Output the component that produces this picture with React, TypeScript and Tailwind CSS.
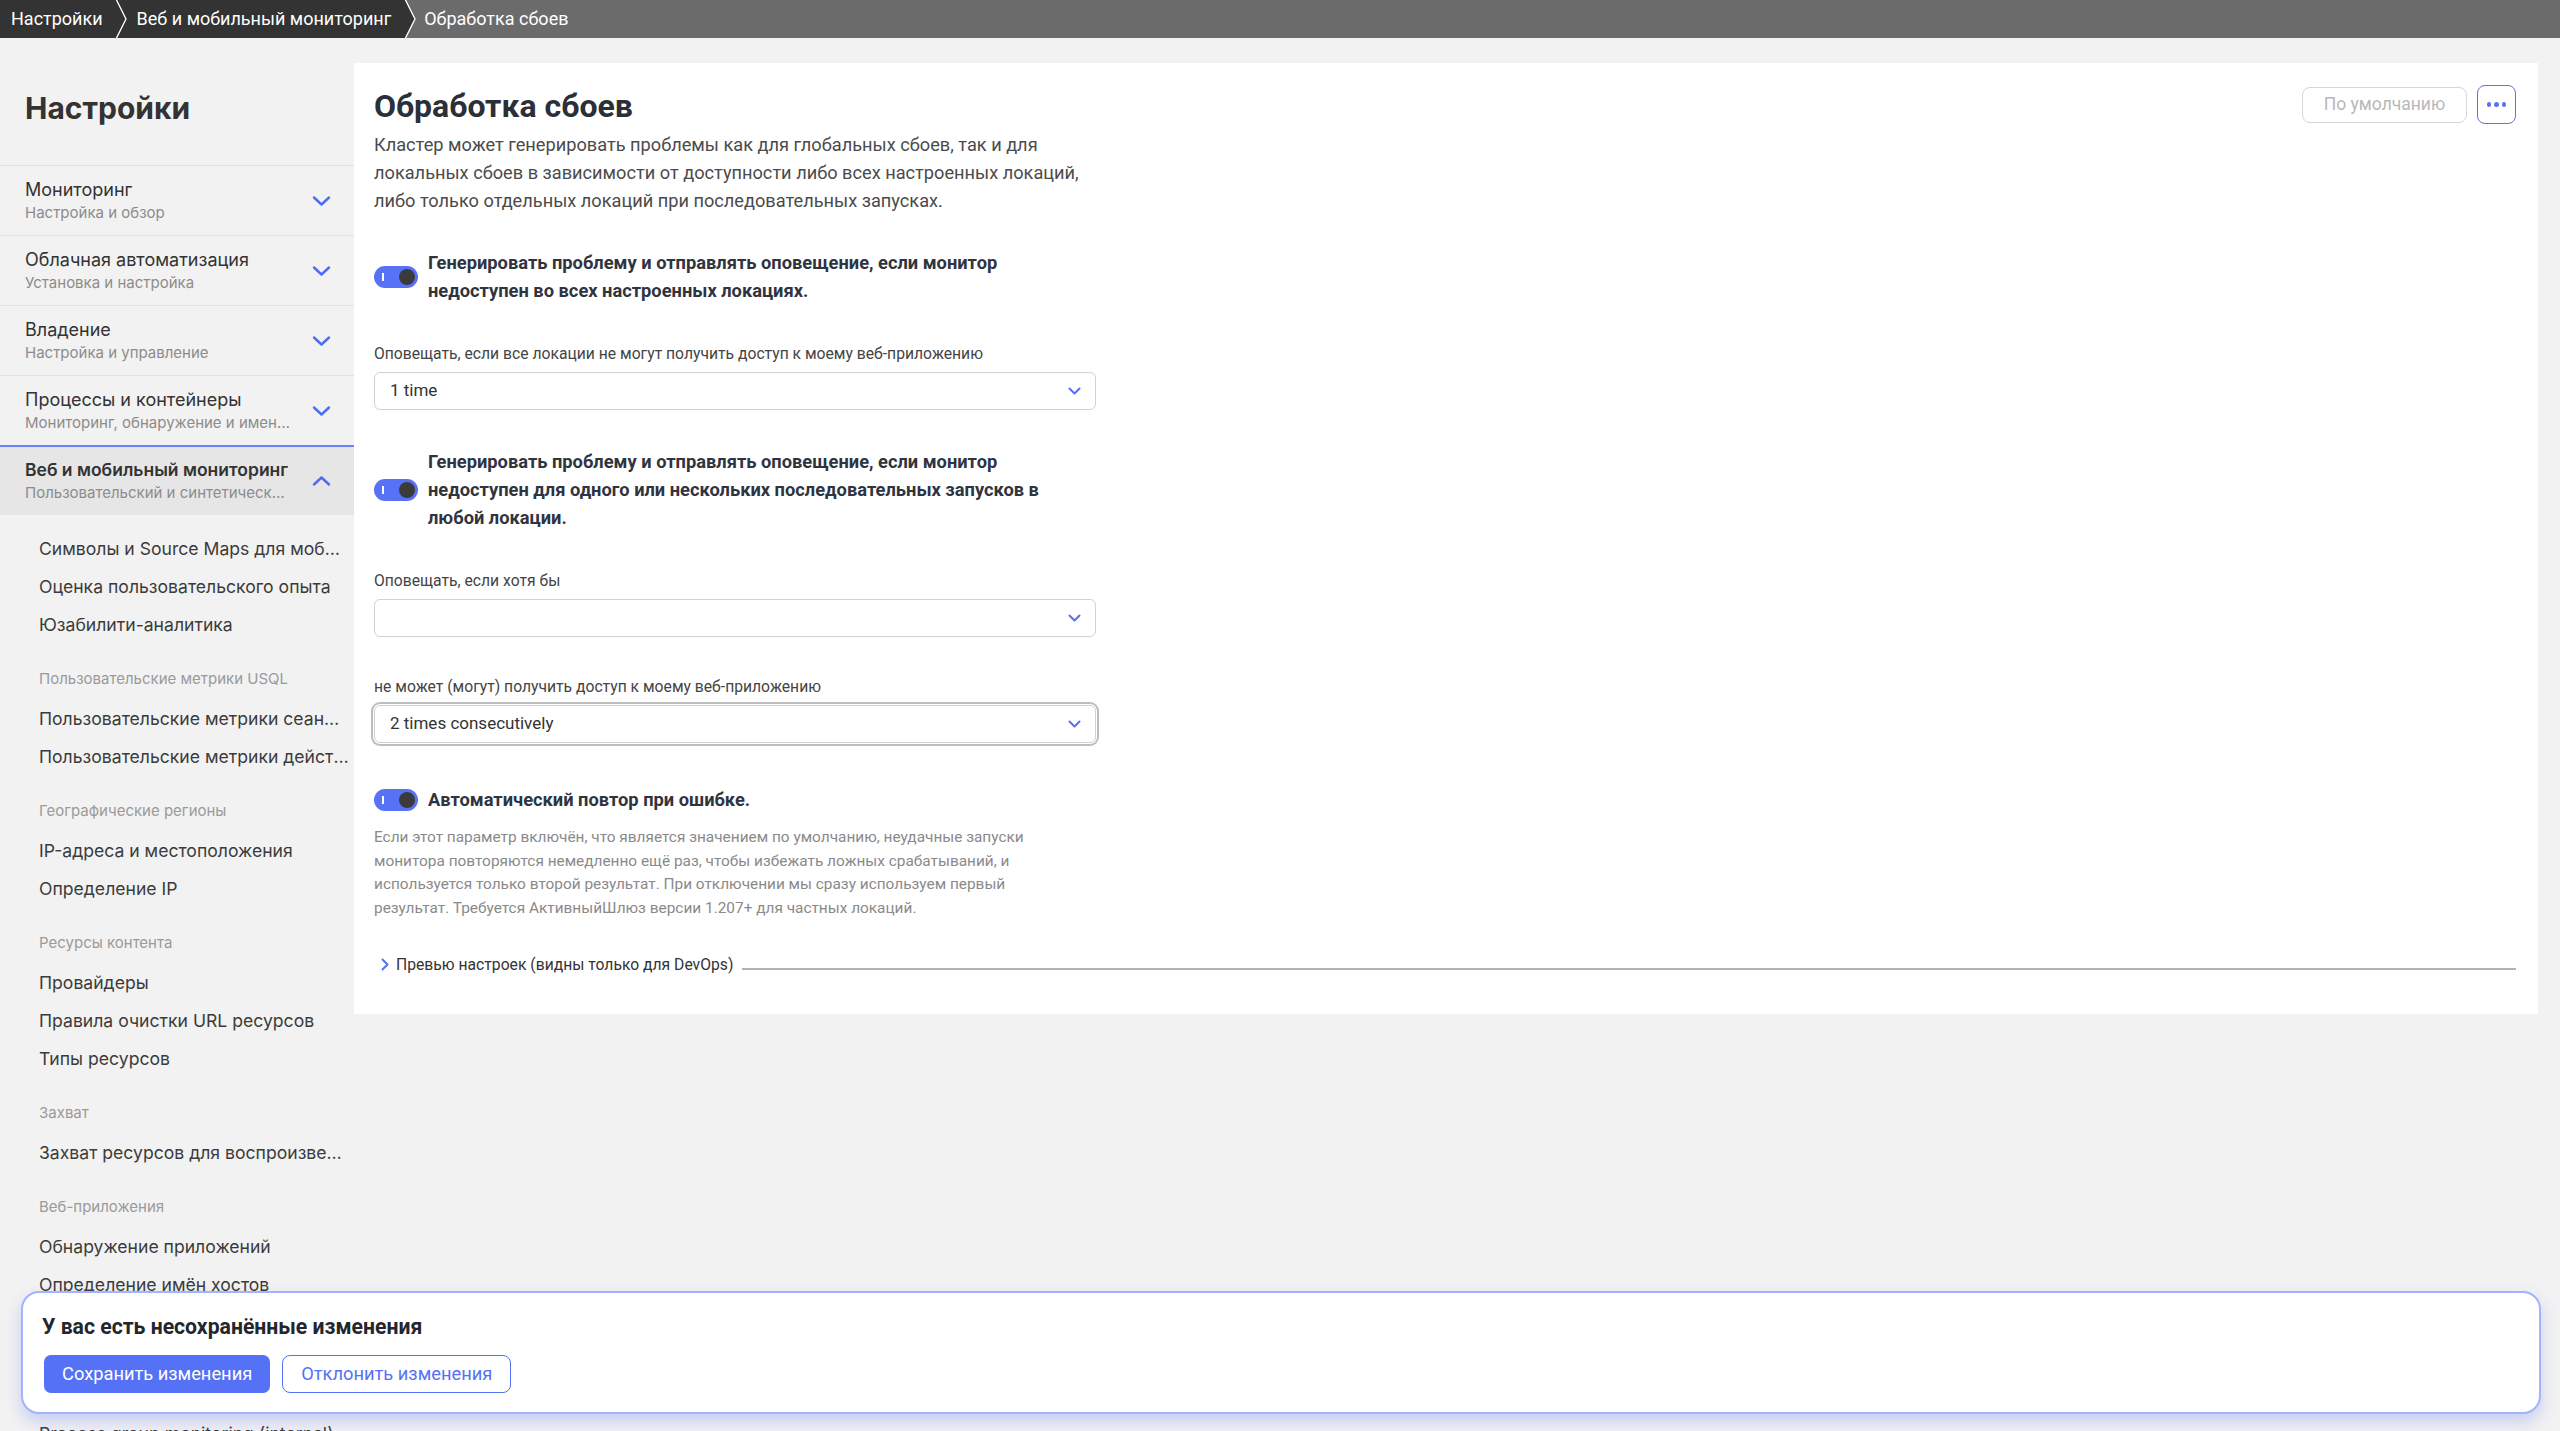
import React from "react";

const BLUE = "#5571f5";

const navItems = [
  { title: "Мониторинг", sub: "Настройка и обзор" },
  { title: "Облачная автоматизация", sub: "Установка и настройка" },
  { title: "Владение", sub: "Настройка и управление" },
  { title: "Процессы и контейнеры", sub: "Мониторинг, обнаружение и именование процессов" },
];

const groups: { label?: string; items: string[] }[] = [
  {
    items: [
      "Символы и Source Maps для мобильных приложений",
      "Оценка пользовательского опыта",
      "Юзабилити-аналитика",
    ],
  },
  {
    label: "Пользовательские метрики USQL",
    items: ["Пользовательские метрики сеансов", "Пользовательские метрики действий пользователей"],
  },
  { label: "Географические регионы", items: ["IP-адреса и местоположения", "Определение IP"] },
  {
    label: "Ресурсы контента",
    items: ["Провайдеры", "Правила очистки URL ресурсов", "Типы ресурсов"],
  },
  { label: "Захват", items: ["Захват ресурсов для воспроизведения сеансов"] },
  { label: "Веб-приложения", items: ["Обнаружение приложений", "Определение имён хостов"] },
];

function Chevron({ up = false }: { up?: boolean }) {
  return (
    <svg width="19" height="12" viewBox="0 0 19 12" className={up ? "rotate-180 shrink-0" : "shrink-0"}>
      <path d="M2 2.5L9.5 9.5L17 2.5" fill="none" stroke="#4d6bf5" strokeWidth="2.4" strokeLinecap="round" strokeLinejoin="round" />
    </svg>
  );
}

function Sep({ from, to }: { from: string; to: string }) {
  return (
    <svg width="12" height="38" viewBox="0 0 12 38" className="block shrink-0">
      <rect width="12" height="38" fill={to} />
      <polygon points="0,0 10,19 0,38" fill={from} />
      <polyline points="0,-1 10,19 0,39" fill="none" stroke="#ffffff" strokeWidth="1.3" />
    </svg>
  );
}

function Breadcrumbs() {
  return (
    <div className="flex h-[38px] shrink-0 bg-[#6b6b6b] text-[18px] leading-[38px] text-white">
      <div className="bg-[#333333] pl-[11px] pr-[13px]">Настройки</div>
      <Sep from="#333333" to="#333333" />
      <div className="bg-[#333333] pl-[9px] pr-[14px]">Веб и мобильный мониторинг</div>
      <Sep from="#333333" to="#6b6b6b" />
      <div className="pl-[7px]">Обработка сбоев</div>
    </div>
  );
}

function Sidebar() {
  return (
    <aside className="w-[354px] shrink-0 overflow-hidden font-['Inter','Noto_Sans',sans-serif]">
      <div className="h-[127px] pl-[25px] pt-[50px]">
        <h2 className="text-[30px] font-bold leading-[40px] text-[#333333]">Настройки</h2>
      </div>
      {navItems.map((n) => (
        <div key={n.title} className="flex h-[70px] items-center border-t border-[#e2e2e2] pl-[25px] pr-[23px]">
          <div className="min-w-0 flex-1">
            <div className="truncate text-[18px] leading-[24px] text-[#333333]">{n.title}</div>
            <div className="truncate text-[15px] leading-[22px] text-[#8c8c8c]">{n.sub}</div>
          </div>
          <div className="ml-[22px]">
            <Chevron />
          </div>
        </div>
      ))}
      <div className="flex h-[70px] items-center border-t-2 border-[#6b82f7] bg-[#e6e6e6] pl-[25px] pr-[23px]">
        <div className="min-w-0 flex-1">
          <div className="truncate text-[17.5px] font-semibold leading-[24px] text-[#333333]">Веб и мобильный мониторинг</div>
          <div className="truncate text-[15px] leading-[22px] text-[#8c8c8c]">
            Пользовательский и синтетический мониторинг
          </div>
        </div>
        <div className="ml-[22px]">
          <Chevron up />
        </div>
      </div>
      <div className="pt-[15px]">
        {groups.map((g, i) => (
          <div key={i}>
            {g.label && (
              <div className="pb-[2px] pl-[39px] pt-4 text-[15px] leading-[38px] text-[#9a9a9a]">{g.label}</div>
            )}
            {g.items.map((it) => (
              <div key={it} className="truncate pl-[39px] pr-[5px] text-[17.6px] leading-[38px] text-[#3b3b3b]">
                {it}
              </div>
            ))}
          </div>
        ))}
        <div className="h-[111px]" />
        <div className="truncate pl-[39px] pr-[5px] text-[17.6px] leading-[38px] text-[#3b3b3b]">
          Process group monitoring (internal)
        </div>
      </div>
    </aside>
  );
}

function Toggle() {
  return (
    <div className="flex h-[22px] w-[44px] shrink-0 items-center rounded-full bg-[#5872f6]">
      <span className="ml-[8px] h-[8px] w-[1.5px] bg-white" />
      <span className="ml-auto mr-[3px] h-[16px] w-[16px] rounded-full bg-[#3b3b3b]" />
    </div>
  );
}

function Select({ value, focused = false }: { value?: string; focused?: boolean }) {
  return (
    <div
      className={
        "flex h-[38px] w-[722px] items-center rounded-[6px] border border-[#d2d2d2] bg-white pl-[15px] pr-[14px] " +
        (focused ? "shadow-[0_0_0_1px_#ffffff,0_0_0_3px_#bdbdbd]" : "")
      }
    >
      <span className="flex-1 text-[17px] text-[#333333]">{value}</span>
      <svg width="13" height="8" viewBox="0 0 13 8">
        <path d="M1.5 1.5L6.5 6.5L11.5 1.5" fill="none" stroke={BLUE} strokeWidth="2" strokeLinecap="round" strokeLinejoin="round" />
      </svg>
    </div>
  );
}

function FieldLabel({ children, className = "" }: { children: React.ReactNode; className?: string }) {
  return <div className={"text-[15.7px] leading-[22px] text-[#444444] " + className}>{children}</div>;
}

function Panel() {
  return (
    <section className="bg-white pb-[38px] pl-[20px] pr-[22px] pt-[22px]">
      <div className="flex items-start justify-between">
        <div className="w-[722px]">
          <h1 className="mt-[1px] text-[32px] font-bold leading-[40px] text-[#2b2f38]">Обработка сбоев</h1>
          <p className="mt-[5px] w-[722px] text-[18.2px] leading-[28px] text-[#4b4b4b]">
            Кластер может генерировать проблемы как для глобальных сбоев, так и для локальных сбоев в зависимости от
            доступности либо всех настроенных локаций, либо только отдельных локаций при последовательных запусках.
          </p>
        </div>
        <div className="flex items-center gap-[10px]">
          <button className="h-[36px] w-[165px] rounded-[8px] border border-[#d6d6d6] text-[17.5px] text-[#b8b8b8]">
            По умолчанию
          </button>
          <button className="flex h-[39px] w-[39px] items-center justify-center gap-[3px] rounded-[8px] border-[1.5px] border-[#5a73f5]">
            <span className="h-[4.5px] w-[4.5px] rounded-full bg-[#5a73f5]" />
            <span className="h-[4.5px] w-[4.5px] rounded-full bg-[#5a73f5]" />
            <span className="h-[4.5px] w-[4.5px] rounded-full bg-[#5a73f5]" />
          </button>
        </div>
      </div>

      <div className="mt-[34px] flex items-center gap-[10px]">
        <Toggle />
        <div className="max-w-[645px] text-[18.3px] font-bold leading-[28px] text-[#2f3440]">
          Генерировать проблему и отправлять оповещение, если монитор недоступен во всех настроенных локациях.
        </div>
      </div>
      <FieldLabel className="mt-[38px]">
        Оповещать, если все локации не могут получить доступ к моему веб-приложению
      </FieldLabel>
      <div className="mt-[7px]">
        <Select value="1 time" />
      </div>

      <div className="mt-[38px] flex items-center gap-[10px]">
        <Toggle />
        <div className="max-w-[645px] text-[18.3px] font-bold leading-[28px] text-[#2f3440]">
          Генерировать проблему и отправлять оповещение, если монитор недоступен для одного или нескольких
          последовательных запусков в любой локации.
        </div>
      </div>
      <FieldLabel className="mt-[38px]">Оповещать, если хотя бы</FieldLabel>
      <div className="mt-[7px]">
        <Select />
      </div>
      <FieldLabel className="mt-[39px]">не может (могут) получить доступ к моему веб-приложению</FieldLabel>
      <div className="mt-[7px]">
        <Select value="2 times consecutively" focused />
      </div>

      <div className="mt-[43px] flex items-center gap-[10px]">
        <Toggle />
        <div className="text-[18.3px] font-bold leading-[28px] text-[#2f3440]">Автоматический повтор при ошибке.</div>
      </div>
      <p className="mt-[12px] w-[700px] text-[15.4px] leading-[23.7px] text-[#8a8a8a]">
        Если этот параметр включён, что является значением по умолчанию, неудачные запуски монитора повторяются
        немедленно ещё раз, чтобы избежать ложных срабатываний, и используется только второй результат. При
        отключении мы сразу используем первый результат. Требуется АктивныйШлюз версии 1.207+ для частных локаций.
      </p>

      <div className="mt-[33px] flex items-center">
        <svg width="8" height="13" viewBox="0 0 8 13" className="ml-[7px] shrink-0">
          <path d="M1.5 1.5L6.5 6.5L1.5 11.5" fill="none" stroke={BLUE} strokeWidth="2" strokeLinecap="round" strokeLinejoin="round" />
        </svg>
        <span className="ml-[7px] whitespace-nowrap text-[15.7px] leading-[22px] text-[#333333]">
          Превью настроек (видны только для DevOps)
        </span>
        <div className="ml-[9px] mt-[8px] h-[2px] flex-1 bg-[#b3b3b3]" />
      </div>
    </section>
  );
}

function UnsavedBar() {
  return (
    <div className="absolute bottom-[17px] left-[21px] right-[19px] h-[123px] rounded-[18px] border-2 border-[#a4b4fb] bg-white pl-[19px] pt-[21px] shadow-[0_8px_16px_rgba(92,112,245,0.28)]">
      <div className="text-[21.2px] font-bold leading-[26px] text-[#23262d]">У вас есть несохранённые изменения</div>
      <div className="ml-[2px] mt-[15px] flex gap-[12px]">
        <button className="h-[38px] rounded-[7px] bg-[#5571f5] px-[18px] text-[18.3px] text-white">Сохранить изменения</button>
        <button className="h-[38px] rounded-[8px] border-[1.5px] border-[#5571f5] bg-white px-[18px] text-[18.3px] text-[#5571f5]">
          Отклонить изменения
        </button>
      </div>
    </div>
  );
}

export default function App() {
  return (
    <div className="relative flex h-screen w-full flex-col overflow-hidden bg-[#f2f2f2] font-['Roboto','Liberation_Sans',sans-serif]">
      <Breadcrumbs />
      <div className="flex min-h-0 flex-1">
        <Sidebar />
        <main className="min-w-0 flex-1 pr-[22px] pt-[25px]">
          <Panel />
        </main>
      </div>
      <UnsavedBar />
    </div>
  );
}
